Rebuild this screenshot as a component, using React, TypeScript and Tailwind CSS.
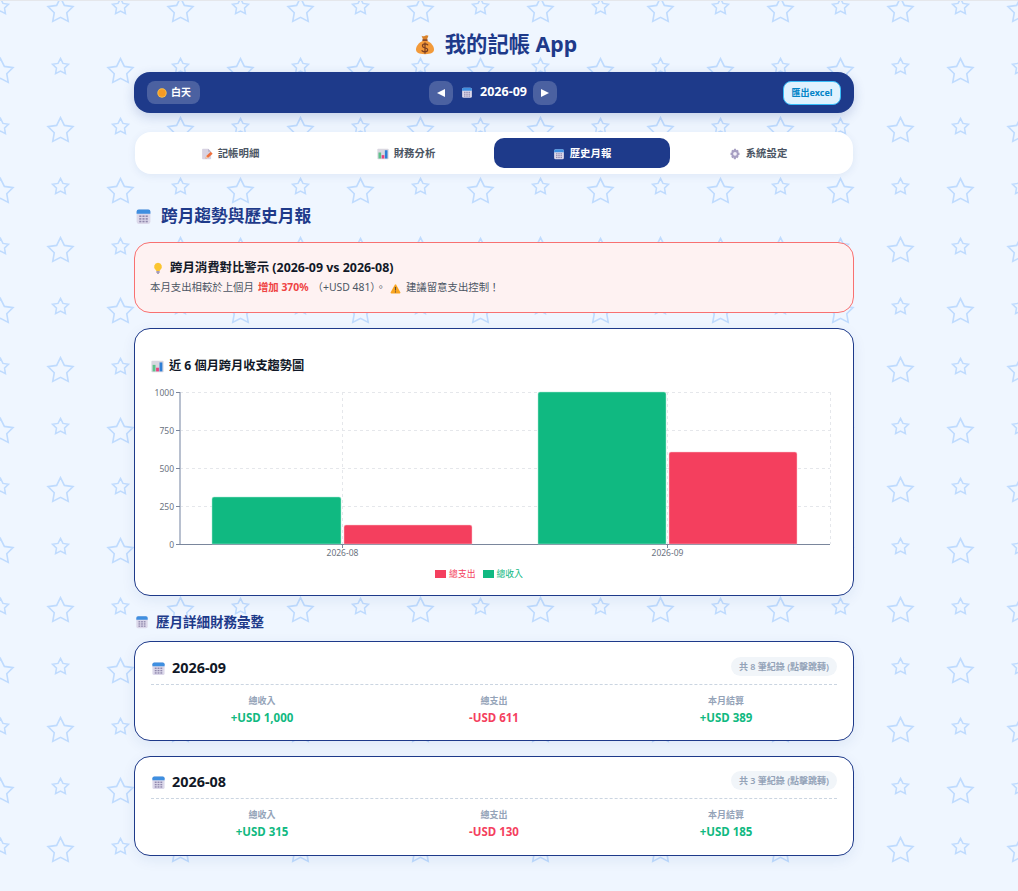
type IconProps = { className?: string };

function MoneyBag({ className }: IconProps) {
  return (
    <svg viewBox="3 1 26 30" className={className}>
      <path d="M11 3.500c2 1 3.500 1 5 0s3.500-1 5 0l-2.500 6h-5z" fill="#d9822b" />
      <rect x="12" y="8.500" width="8" height="2.500" rx="1" fill="#8a4b2a" />
      <path d="M12.500 11C7 13.500 3 18.500 3 23c0 5 4 7 13 7s13-2 13-7c0-4.500-4-9.500-9.500-12z" fill="#f29a3a" />
      <path d="M20 16.500c-1-1-2.300-1.300-4-1.300-2.200 0-3.700 1-3.700 2.800 0 3.800 7.600 1.800 7.600 5.700 0 1.800-1.700 2.800-3.900 2.800-1.800 0-3.200-.5-4.300-1.500M16 13.500v15" fill="none" stroke="#7a3f22" strokeWidth="1.800" strokeLinecap="round" />
    </svg>
  );
}

function CalendarIcon({ className }: IconProps) {
  return (
    <svg viewBox="0 0 32 32" className={className}>
      <rect x="3" y="3" width="26" height="27" rx="4" fill="#dcd8ea" />
      <path d="M3 11V7a4 4 0 0 1 4-4h18a4 4 0 0 1 4 4v4z" fill="#3f8fe0" />
      <g fill="#9088ad">
        <rect x="8" y="14" width="4" height="3" />
        <rect x="14" y="14" width="4" height="3" />
        <rect x="20" y="14" width="4" height="3" />
        <rect x="8" y="19" width="4" height="3" />
        <rect x="14" y="19" width="4" height="3" />
        <rect x="20" y="19" width="4" height="3" />
        <rect x="8" y="24" width="4" height="3" />
        <rect x="14" y="24" width="4" height="3" />
        <rect x="20" y="24" width="4" height="3" />
      </g>
    </svg>
  );
}

function MemoIcon({ className }: IconProps) {
  return (
    <svg viewBox="0 0 32 32" className={className}>
      <path d="M3 4a2 2 0 0 1 2-2h14l8 8v18a2 2 0 0 1-2 2H5a2 2 0 0 1-2-2z" fill="#d8d2e2" />
      <path d="M19 2l8 8h-8z" fill="#b9b1c9" />
      <path d="M12 28l2-7 12-11 5 5-12 11z" fill="#f0703c" />
      <path d="M12 28l2-7 5 5z" fill="#f4c9a5" />
    </svg>
  );
}

function ChartIcon({ className }: IconProps) {
  return (
    <svg viewBox="0 0 32 32" className={className}>
      <rect x="1" y="2" width="30" height="28" rx="2" fill="#d9d7e0" />
      <rect x="4" y="12" width="7" height="16" fill="#5fc28a" />
      <rect x="12.500" y="19" width="7" height="9" fill="#e8437f" />
      <rect x="21" y="6" width="7" height="22" fill="#2f7fd6" />
    </svg>
  );
}

function GearIcon({ className }: IconProps) {
  return (
    <svg viewBox="0 0 32 32" className={className}>
      <path d="M13.500 2h5l1 4 3-1.500 3.500 3.500L24 11l4 1.500v6L24 20l1.500 3.500-3.500 3.500-3-1.500-1 4.500h-5l-1-4.500-3 1.500L6 23.500 8 20l-4-1.500v-6L8 11 6 8l3.500-3.500 3 1.500z" fill="#a79fc2" />
      <circle cx="16" cy="15.500" r="5" fill="#f3f0f8" />
    </svg>
  );
}

function BulbIcon({ className }: IconProps) {
  return (
    <svg viewBox="0 0 32 32" className={className}>
      <path d="M16 2a10.500 10.500 0 0 0-6 19c1 .8 1.500 2 1.500 3h9c0-1 .5-2.200 1.500-3a10.500 10.500 0 0 0-6-19z" fill="#fbc531" />
      <rect x="11.500" y="24" width="9" height="5" rx="1" fill="#a49ab8" />
      <rect x="13.500" y="29" width="5" height="2" rx="1" fill="#7b7191" />
    </svg>
  );
}

function WarningIcon({ className }: IconProps) {
  return (
    <svg viewBox="0 0 32 32" className={className}>
      <path d="M14 5a2.300 2.300 0 0 1 4 0l12 22a2.300 2.300 0 0 1-2 3.400H4A2.300 2.300 0 0 1 2 27z" fill="#f9a51f" />
      <rect x="14.500" y="11" width="3" height="11" rx="1.500" fill="#5b4a3a" />
      <circle cx="16" cy="26" r="1.800" fill="#5b4a3a" />
    </svg>
  );
}

function SunIcon({ className }: IconProps) {
  return (
    <svg viewBox="0 0 32 32" className={className}>
      <circle cx="16" cy="16" r="15" fill="#fcc44a" />
      <circle cx="16" cy="16" r="12" fill="#f59a23" />
    </svg>
  );
}

function StarBackdrop() {
  const star = "12 2 15.09 8.26 22 9.27 17 14.14 18.18 21.02 12 17.77 5.82 21.02 7 14.14 2 9.27 8.91 8.26";
  const big = [[60.5, 8.5], [60.5, 128.5], [0.5, 69.5], [120.5, 69.5]];
  const small = [[60.5, 65], [0.5, 5], [120.5, 5], [0.5, 125], [120.5, 125]];
  return (
    <svg className="pointer-events-none absolute inset-0 h-full w-full">
      <defs>
        <pattern id="stars" width="120" height="120" patternUnits="userSpaceOnUse">
          {big.map(([x, y]) => (
            <polygon key={`b${x}-${y}`} points={star} fill="none" stroke="#bfdbfe" strokeWidth="1.3" transform={`translate(${x - 15} ${y - 14.4}) scale(1.25)`} />
          ))}
          {small.map(([x, y]) => (
            <polygon key={`s${x}-${y}`} points={star} fill="none" stroke="#bfdbfe" strokeWidth="1.9" transform={`translate(${x - 9.6} ${y - 9.2}) scale(0.8)`} />
          ))}
        </pattern>
      </defs>
      <rect width="100%" height="100%" fill="url(#stars)" />
    </svg>
  );
}

const yTicks = [
  { label: "1000", y: 392 },
  { label: "750", y: 430 },
  { label: "500", y: 468 },
  { label: "250", y: 506 },
  { label: "0", y: 544 },
];

function TrendChart() {
  // svg sits at x=135, y=380 of the page, so coords below are page coords minus that
  const ox = 135;
  const oy = 380;
  return (
    <svg width="717" height="205" className="block" fontFamily="'Noto Sans', sans-serif">
      {yTicks.slice(0, 4).map((t) => (
        <line key={t.label} x1={180 - ox} x2={830 - ox} y1={t.y - oy + 0.5} y2={t.y - oy + 0.5} stroke="#e5e7eb" strokeDasharray="3 3" />
      ))}
      {[342, 667, 830].map((x) => (
        <line key={x} x1={x - ox + 0.5} x2={x - ox + 0.5} y1={392 - oy} y2={544 - oy} stroke="#e5e7eb" strokeDasharray="3 3" />
      ))}
      <line x1={180 - ox} x2={180 - ox} y1={392 - oy} y2={544 - oy} stroke="#b8c0cf" strokeWidth="2" />
      <line x1={180 - ox} x2={830 - ox} y1={544 - oy + 0.5} y2={544 - oy + 0.5} stroke="#7a869c" />
      {yTicks.map((t) => (
        <g key={t.label}>
          <line x1={176 - ox} x2={180 - ox} y1={t.y - oy + 0.5} y2={t.y - oy + 0.5} stroke="#7a869c" />
          <text x={174 - ox} y={t.y - oy + 3.5} textAnchor="end" fontSize="8.5" fill="#6b7280">{t.label}</text>
        </g>
      ))}
      <path d={`M${212 - ox} ${544 - oy}v-45a2 2 0 0 1 2-2h125a2 2 0 0 1 2 2v45z`} fill="#10b981" stroke="#a7e8d0" strokeWidth="0.5" />
      <path d={`M${344 - ox} ${544 - oy}v-17a2 2 0 0 1 2-2h124a2 2 0 0 1 2 2v17z`} fill="#f43f5e" stroke="#fbc4ce" strokeWidth="0.5" />
      <path d={`M${538 - ox} ${544 - oy}v-150a2 2 0 0 1 2-2h124a2 2 0 0 1 2 2v150z`} fill="#10b981" stroke="#a7e8d0" strokeWidth="0.5" />
      <path d={`M${669 - ox} ${544 - oy}v-90a2 2 0 0 1 2-2h124a2 2 0 0 1 2 2v90z`} fill="#f43f5e" stroke="#fbc4ce" strokeWidth="0.5" />
      {[342, 667].map((x, i) => (
        <g key={x}>
          <line x1={x - ox + 0.5} x2={x - ox + 0.5} y1={544 - oy} y2={548 - oy} stroke="#7a869c" />
          <text x={x - ox + 0.5} y={556 - oy} textAnchor="middle" fontSize="8.5" fill="#6b7280">{i === 0 ? "2026-08" : "2026-09"}</text>
        </g>
      ))}
    </svg>
  );
}

const months = [
  { month: "2026-09", count: 8, income: "+USD 1,000", expense: "-USD 611", net: "+USD 389", head: "h-[43px] pt-[15px]", body: "pt-[10px]" },
  { month: "2026-08", count: 3, income: "+USD 315", expense: "-USD 130", net: "+USD 185", head: "h-[42px] pt-[14px]", body: "pt-[10px]" },
];

function MonthCard({ m }: { m: (typeof months)[number] }) {
  return (
    <div className="h-[100px] rounded-2xl border border-[#1e3a8a] bg-white px-4 shadow-[0_4px_14px_rgba(30,58,138,0.08)]">
      <div className={`flex items-start justify-between border-b border-dashed border-[#cbd5e1] ${m.head}`}>
        <div className="mt-[1px] flex items-center gap-[6px]">
          <CalendarIcon className="h-[15px] w-[15px]" />
          <span className="text-[14.4px] leading-[20px] font-bold text-[#111827]">{m.month}</span>
        </div>
        <span className="rounded-full bg-[#f1f5f9] px-2 py-[2px] text-[9px] leading-[15px] font-semibold text-[#94a3b8]">
          共 {m.count} 筆紀錄 (點擊跳轉)
        </span>
      </div>
      <div className={`-mx-[5px] grid grid-cols-3 text-center ${m.body}`}>
        <div>
          <div className="text-[9px] leading-[12px] font-semibold text-[#94a3b8]">總收入</div>
          <div className="mt-[3px] text-[11.5px] leading-[16px] font-bold text-[#10b981]">{m.income}</div>
        </div>
        <div>
          <div className="text-[9px] leading-[12px] font-semibold text-[#94a3b8]">總支出</div>
          <div className="mt-[3px] text-[11.5px] leading-[16px] font-bold text-[#f43f5e]">{m.expense}</div>
        </div>
        <div>
          <div className="text-[9px] leading-[12px] font-semibold text-[#94a3b8]">本月結算</div>
          <div className="mt-[3px] text-[11.5px] leading-[16px] font-bold text-[#10b981]">{m.net}</div>
        </div>
      </div>
    </div>
  );
}

const tabs = [
  { label: "記帳明細", Icon: MemoIcon },
  { label: "財務分析", Icon: ChartIcon },
  { label: "歷史月報", Icon: CalendarIcon, active: true },
  { label: "系統設定", Icon: GearIcon },
];

export default function App() {
  return (
    <div className="relative min-h-[891px] overflow-hidden border-t border-[#e5e7eb] bg-[#eff6ff] font-['Noto_Sans','Noto_Sans_CJK_TC',sans-serif]">
      <StarBackdrop />
      <div className="relative mr-[30px]">
        <div className="mx-auto w-[720px] pt-[29px] pb-9">
          <h1 className="flex h-[28px] items-center justify-center gap-[11px] pl-[5px] text-[21.3px] leading-[28px] font-bold text-[#1e3a8a]">
            <MoneyBag className="h-[21px] w-[18px]" />
            我的記帳 App
          </h1>

          <div className="mt-[14px] flex h-[41px] items-center justify-between rounded-2xl bg-[#1e3a8a] pr-[13px] pl-[13px] shadow-[0_4px_12px_rgba(30,58,138,0.2)]">
            <button className="flex h-[23px] items-center gap-1 rounded-lg bg-white/20 pr-[9px] pl-[10px] text-[10px] font-bold text-white">
              <SunIcon className="h-[10px] w-[10px]" />
              白天
            </button>
            <div className="ml-[3px] flex items-center">
              <button className="flex h-6 w-6 items-center justify-center rounded-lg bg-white/20 text-white">
                <svg viewBox="0 0 8 8" className="h-2 w-2"><path d="M0 4l8-4v8z" fill="#fff" /></svg>
              </button>
              <CalendarIcon className="ml-2 h-[13px] w-[12px]" />
              <span className="mr-[6px] ml-[7px] text-[12.5px] font-bold text-white">2026-09</span>
              <button className="flex h-6 w-6 items-center justify-center rounded-lg bg-white/20 text-white">
                <svg viewBox="0 0 8 8" className="h-2 w-2"><path d="M8 4L0 0v8z" fill="#fff" /></svg>
              </button>
            </div>
            <button className="flex h-6 w-[58px] items-center justify-center rounded-lg border border-[#38bdf8] bg-[#e0f2fe] text-[9px] font-bold text-[#0284c7]">
              匯出excel
            </button>
          </div>

          <div className="mt-[19px] ml-[1px] flex h-[42px] w-[718px] items-center rounded-2xl bg-white px-[7px] shadow-[0_2px_8px_rgba(30,58,138,0.08)]">
            {tabs.map(({ label, Icon, active }) => (
              <div
                key={label}
                className={`flex h-[30px] flex-1 items-center justify-center gap-[5px] rounded-[10px] pt-[2px] text-[10.4px] font-bold ${active ? "bg-[#1e3a8a] text-white" : "text-[#4b5563]"}`}
              >
                <Icon className="h-[12px] w-[12px]" />
                {label}
              </div>
            ))}
          </div>

          <h2 className="mt-[30px] ml-[1px] flex h-6 items-center gap-[9px] text-[16.7px] font-bold text-[#1e3a8a]">
            <CalendarIcon className="h-[17px] w-[17px]" />
            跨月趨勢與歷史月報
          </h2>

          <div className="mt-[14px] h-[71px] rounded-2xl border border-[#f87171] bg-[#fef2f2] pt-[17px] pr-4 pl-[15px]">
            <div className="flex h-4 items-center gap-[6px] pl-[2px] text-[12.4px] font-bold text-[#111827]">
              <BulbIcon className="h-3 w-3" />
              跨月消費對比警示 (2026-09 vs 2026-08)
            </div>
            <div className="mt-[4px] flex h-4 items-center text-[10.4px] text-[#4b5563]">
              本月支出相較於上個月
              <span className="ml-[4px] font-bold text-[#ef4444]">增加 370%</span>
              <span className="ml-[4px]">（+USD 481）。</span>
              <WarningIcon className="mr-[5px] ml-[4px] h-[11px] w-[11px]" />
              建議留意支出控制！
            </div>
          </div>

          <div className="mt-[15px] h-[268px] rounded-2xl border border-[#1e3a8a] bg-white shadow-[0_4px_14px_rgba(30,58,138,0.08)]">
            <div className="flex h-[16px] translate-y-[29px] items-center gap-[5px] pl-4 text-[12.2px] font-bold text-[#111827]">
              <ChartIcon className="h-[13px] w-[13px]" />
              近 6 個月跨月收支趨勢圖
            </div>
            <div className="mt-[35px]">
              <TrendChart />
            </div>
            <div className="-mt-[17px] flex items-center justify-center gap-[7px] pr-[30px] text-[8.8px] leading-[12px]">
              <span className="flex items-center gap-[3px] text-[#f43f5e]">
                <span className="h-2 w-[11px] bg-[#f43f5e]" />
                總支出
              </span>
              <span className="flex items-center gap-[3px] text-[#10b981]">
                <span className="h-2 w-[11px] bg-[#10b981]" />
                總收入
              </span>
            </div>
          </div>

          <h3 className="mt-[17px] ml-[1px] flex h-[18px] items-center gap-[7px] text-[13.5px] font-bold text-[#1e3a8a]">
            <CalendarIcon className="h-[14px] w-[14px]" />
            歷月詳細財務彙整
          </h3>

          <div className="mt-[10px] flex flex-col gap-[15px]">
            {months.map((m) => (
              <MonthCard key={m.month} m={m} />
            ))}
          </div>
        </div>
      </div>
    </div>
  );
}
